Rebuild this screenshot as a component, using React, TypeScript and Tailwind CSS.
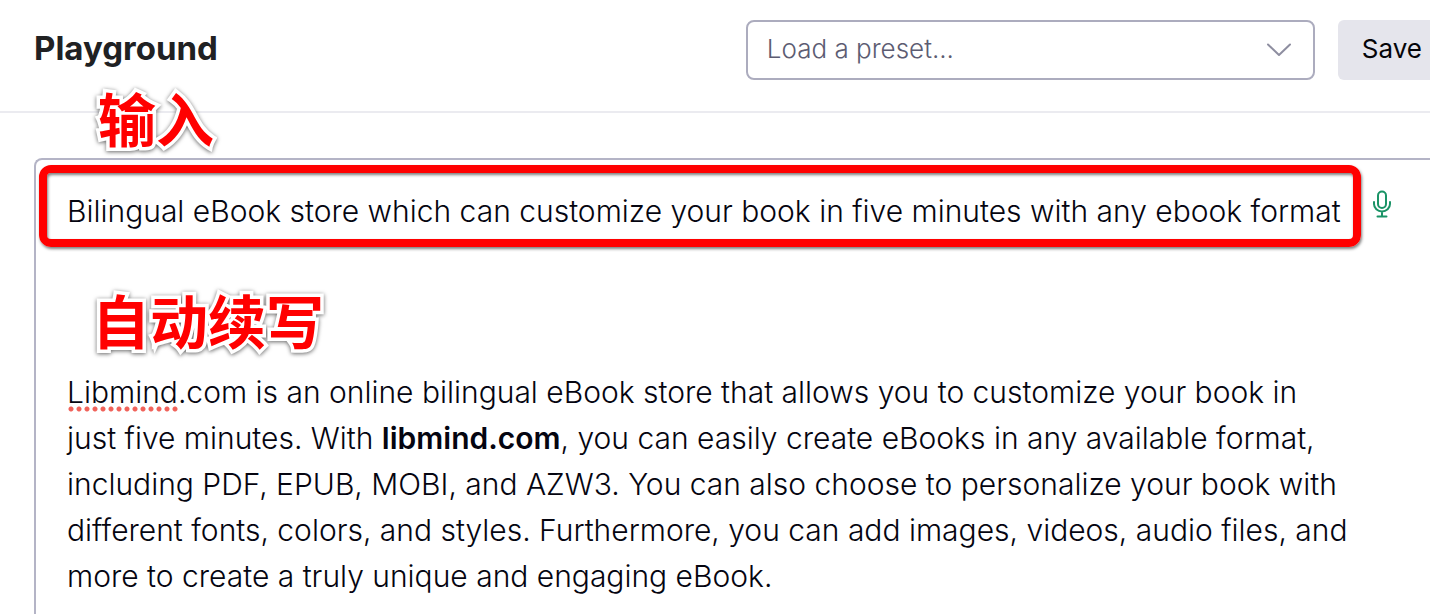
import React from "react";

function Header() {
  return (
    <header className="flex items-start border-b-2 border-[#ebebf0] pt-5 pb-[31px] pl-[34px]">
      <h1 className="flex-1 pt-2 text-[33px] leading-10 font-bold text-[#202123]">Playground</h1>
      <div className="relative w-[41%] max-w-[569px] shrink-0">
        <select
          aria-label="Load a preset"
          defaultValue=""
          className="h-[60px] w-full appearance-none rounded-lg border-2 border-[#acacbe] bg-white pr-16 pb-[3px] pl-[19px] text-[26px] leading-8 font-light text-[#5c5c72]"
        >
          <option value="">Load a preset...</option>
        </select>
        <svg
          className="pointer-events-none absolute top-[22px] right-[22px] h-4 w-7"
          viewBox="0 0 28 16"
          fill="none"
          stroke="#8e8ea0"
          strokeWidth="2"
          strokeLinecap="round"
          strokeLinejoin="round"
          aria-hidden="true"
        >
          <path d="M3 2.5 14 13 25 2.5" />
        </svg>
      </div>
      <button
        type="button"
        className="ml-[23px] h-[60px] shrink-0 rounded-l-md bg-[#e5e5ec] pr-2 pb-[3px] pl-6 text-[26px] leading-8 text-[#050509]"
      >
        Save
      </button>
    </header>
  );
}

function MicIcon() {
  return (
    <svg
      className="h-7 w-[18px]"
      viewBox="0 0 18 28"
      fill="none"
      stroke="#1a9366"
      strokeWidth="2"
      strokeLinecap="round"
      aria-hidden="true"
    >
      <rect x="5" y="1.5" width="8" height="16.5" rx="4" />
      <path d="M1 12v2a8 7.5 0 0 0 16 0v-2M9 21.5V26M4.5 26.5h9" />
    </svg>
  );
}

function Callout({ children, className }: { children: string; className: string }) {
  return (
    <span
      lang="zh-CN"
      className={
        "pointer-events-none absolute z-10 font-['Noto_Sans_CJK_SC',sans-serif] text-[58px] leading-[64px] font-bold whitespace-nowrap text-[#ff0000] [-webkit-text-stroke:7px_white] [paint-order:stroke_fill] drop-shadow-[0_1px_2px_rgba(0,0,0,0.6)] " +
        className
      }
    >
      {children}
    </span>
  );
}

export default function App() {
  return (
    <div className="flex min-h-screen flex-col overflow-x-hidden bg-white font-[Inter,sans-serif]">
      <Header />
      <main className="flex flex-1 flex-col pt-[45px] pl-[34px]">
        <div className="relative flex-1 rounded-tl-lg border-t-2 border-l-2 border-[#b4b4c6] pb-3 pt-[5px] pl-[3px] text-[30px] leading-[46px] font-light text-[#050510]">
          <Callout className="-top-[75px] left-[62px]">输入</Callout>
          <Callout className="top-[127px] left-[56px]">自动续写</Callout>
          <div className="flex">
            <div className="flex-1 rounded-xl border-8 border-[#ff0000] pt-[15px] pb-[5px] pl-5 shadow-[1px_2px_3px_rgba(0,0,0,0.5),inset_1px_2px_3px_rgba(0,0,0,0.5)]">
              <div contentEditable suppressContentEditableWarning role="textbox" aria-label="Prompt" className="outline-none">
                <p className="whitespace-nowrap">
                  Bilingual eBook store which can customize your book in five minutes with any ebook format
                </p>
              </div>
            </div>
            <button type="button" aria-label="Record voice" className="mt-[25px] mr-[39px] ml-3 h-7 w-[18px] shrink-0">
              <MicIcon />
            </button>
          </div>
          <div
            contentEditable
            suppressContentEditableWarning
            role="textbox"
            aria-label="Completion"
            aria-multiline="true"
            spellCheck={false}
            className="mt-[122px] pr-[76px] pl-7 outline-none"
          >
            <p>
              <span className="bg-[radial-gradient(circle,#f0625a_2px,transparent_3px)] bg-[length:8px_6px] bg-[position:left_bottom] bg-repeat-x pb-[2px]">Libmind</span>
              .com is an online bilingual eBook store that allows you to customize your book in just five minutes. With{" "}
              <strong className="font-semibold">libmind.com</strong>, you can easily create eBooks in any available
              format, including PDF, EPUB, MOBI, and AZW3. You can also choose to personalize your book with different
              fonts, colors, and styles. Furthermore, you can add images, videos, audio files, and more to create a truly
              unique and engaging eBook.
            </p>
          </div>
        </div>
      </main>
    </div>
  );
}
